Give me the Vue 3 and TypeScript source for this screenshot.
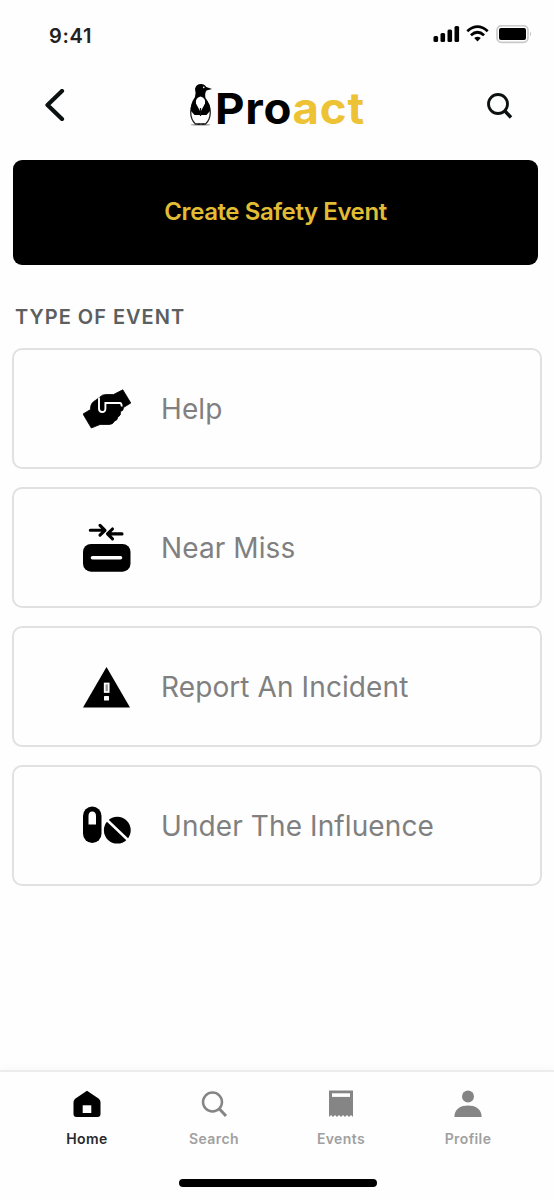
<script setup lang="ts">
interface EventType { id: string; label: string }
interface Tab { id: string; label: string; active?: boolean }

const eventTypes: EventType[] = [
  { id: 'help', label: 'Help' },
  { id: 'near', label: 'Near Miss' },
  { id: 'incident', label: 'Report An Incident' },
  { id: 'influence', label: 'Under The Influence' },
]
const tabs: Tab[] = [
  { id: 'home', label: 'Home', active: true },
  { id: 'search', label: 'Search' },
  { id: 'events', label: 'Events' },
  { id: 'profile', label: 'Profile' },
]
</script>

<template>
  <div class="screen">
    <div class="status">
      <span class="time">9:41</span>
      <svg class="status-icons" width="100" height="20" viewBox="0 0 100 20">
        <rect x="0.5" y="11" width="4.6" height="6" rx="1.5" />
        <rect x="7.5" y="8" width="4.6" height="9" rx="1.5" />
        <rect x="14.5" y="4.5" width="4.6" height="12.5" rx="1.5" />
        <rect x="21.5" y="1" width="4.6" height="16" rx="1.5" />
        <g fill="none" stroke="#000" stroke-width="2.7">
          <path d="M34.3 6.2Q44.5-3 54.7 6.2" />
          <path d="M37.9 10.2Q44.5 4.3 51.1 10.2" />
        </g>
        <path d="M41.2 12.9Q44.5 10.7 47.8 12.9L44.5 16.5Z" />
        <rect x="64" y="0.7" width="31" height="16.6" rx="4.5" fill="#fff" stroke="#c9c9c9" stroke-width="1.7" />
        <rect x="66" y="3" width="27" height="12" rx="2" />
        <path d="M97.2 6.5q1.8 2.5 0 5z" fill="#aaa" />
      </svg>
    </div>

    <header class="header">
      <svg class="back" width="20" height="32" viewBox="0 0 20 32"><path d="M17 2L2.5 16L17 30" fill="none" stroke="#0b1010" stroke-width="4.2" stroke-linecap="round" stroke-linejoin="round" /></svg>
      <div class="logo">
        <svg class="penguin" width="24" height="44" viewBox="0 0 24 44">
          <ellipse cx="10.5" cy="40.7" rx="10" ry="1" fill="#aaa" />
          <path d="M6.5 15C-1 22-1 34 5.5 40H15.5C22 34 22 22 14.5 15Z" fill="#fff" stroke="#222" stroke-width="1.3" />
          <path d="M5 5Q6 0 11 0Q14.5 0 16.3 3L22 5L16.5 6.5Q14.5 9 15.5 14Q21 21 20 27L16.5 31L10.5 31L4.5 31L1 27Q0 20 5 13Q6 8 5 5Z" fill="#000" />
          <path d="M10.5 12.5Q5 14 6 19.5L10.5 28L15 19.5Q16 14 10.5 12.5Z" fill="#fff" />
          <path d="M10.5 24V32" stroke="#111" stroke-width="1.3" />
          <path d="M7.5 40.3h2.5M11.5 40.3h3" stroke="#222" stroke-width="1.6" />
          <circle cx="13.8" cy="3.4" r=".8" fill="#fff" />
        </svg>
        <span class="wordmark">Pro<span class="gold">act</span></span>
      </div>
      <svg class="find" width="26" height="27" viewBox="0 0 26 27" fill="none" stroke="#0b1010" stroke-width="2.8"><circle cx="11" cy="11" r="9.5" /><path d="M17.5 17.5L24 24.5" stroke-width="3.4" /></svg>
    </header>

    <button class="create"><span>Create Safety Event</span></button>

    <h2 class="section">TYPE OF EVENT</h2>

    <div class="list">
      <div v-for="item in eventTypes" :key="item.id" class="card">
        <svg v-if="item.id === 'help'" class="icon" width="48" height="50" viewBox="0 -5 48 50">
          <path d="M0 25L7.5 20.5Q7 14 13 11L17 8Q19 5.5 23 5.5H30.5L39.8 .8L47.8 14L40.5 18.5Q40.5 22 37.5 22.5Q38 27 34.8 28Q34.5 31.5 31.5 32Q30 35.5 26 35.5H17L8.3 39Z" stroke="#000" stroke-width=".8" stroke-linejoin="round" />
          <path d="M16 8.5V19.5Q16 23 19.2 23T22.4 19.5V14H37Q38.5 14 38.8 17.5" fill="none" stroke="#fff" stroke-width="1.9" />
        </svg>
        <svg v-else-if="item.id === 'near'" class="icon" width="48" height="50" viewBox="0 0 48 50">
          <rect x="0" y="21" width="47.5" height="27.7" rx="8" />
          <path d="M9.5 34.8H37.5" stroke="#fff" stroke-width="3.6" stroke-linecap="round" />
          <path d="M7.3 7.3H21M17 2.4L22 7.3L17 12.2M39 10.9H25.5M29.5 6L24.5 10.9L29.5 15.8" fill="none" stroke="#000" stroke-width="3.1" stroke-linecap="round" stroke-linejoin="round" />
        </svg>
        <svg v-else-if="item.id === 'incident'" class="icon" width="48" height="50" viewBox="0 -5 48 50">
          <path d="M23.5 0L47 40.5H0Z" />
          <rect x="21.7" y="16.5" width="4" height="8.5" fill="#999" stroke="#fff" stroke-width="1.7" />
          <rect x="21" y="29" width="5" height="4.5" rx=".6" fill="#fff" />
        </svg>
        <svg v-else class="icon" width="48" height="50" viewBox="0 -5 48 50">
          <rect x="0" y="0.5" width="18.5" height="36.5" rx="9.25" />
          <path d="M5.5 18.5V10Q5.5 5.5 9.25 5.5T13 10V18.5Z" fill="#fff" />
          <circle cx="34.3" cy="24.2" r="13.4" />
          <path d="M23.5 13.5L46 35" stroke="#fff" stroke-width="2.5" />
        </svg>
        <span class="label">{{ item.label }}</span>
      </div>
    </div>

    <nav class="tabs">
      <div v-for="tab in tabs" :key="tab.id" :class="['tab', { active: tab.active }]">
        <svg v-if="tab.id === 'home'" width="28" height="28" viewBox="0 0 28 28"><path d="M14 .7L25.5 8.5Q27.5 10 27.5 12V24Q27.5 27 24.5 27H3.5Q.5 27 .5 24V12Q.5 10 2.5 8.5Z" /><rect x="9.7" y="15.3" width="8.6" height="7.7" fill="#fff" /></svg>
        <svg v-else-if="tab.id === 'search'" width="28" height="28" viewBox="0 0 28 28" fill="none" stroke="#858585" stroke-width="2.5"><circle cx="12.5" cy="12" r="9.5" /><path d="M19 18.5L26 26" stroke-width="3" /></svg>
        <svg v-else-if="tab.id === 'events'" width="28" height="28" viewBox="0 0 28 28" fill="#858585"><path d="M2 .5H26V27L24 25L22 27L20 25L18 27L16 25L14 27L12 25L10 27L8 25L6 27L4 25L2 27Z" /><rect x="5" y="3.3" width="18" height="3.6" fill="#fff" /></svg>
        <svg v-else width="28" height="28" viewBox="0 0 28 28" fill="#858585"><circle cx="14" cy="6.5" r="6" /><path d="M.5 27V25C1.5 18.5 7 15.5 14 15.5S26.5 18.5 27.5 25V27Z" /></svg>
        <span>{{ tab.label }}</span>
      </div>
    </nav>
    <div class="home-indicator"></div>
  </div>
</template>

<style>
body { background: #fefefe; }
</style>

<style scoped>
* { box-sizing: border-box; }
.screen { width: 554px; height: 1200px; display: flex; flex-direction: column; background: #fefefe; font-family: Inter, "Liberation Sans", sans-serif; overflow: hidden; }
.status { height: 70px; display: flex; justify-content: space-between; padding: 25px 21px 0 49px; }
.time { font-size: 20px; line-height: 22px; font-weight: 600; letter-spacing: .7px; color: #222; }
.header { height: 90px; display: flex; padding: 0 41px 0 45px; }
.back { flex: none; margin-top: 19px; }
.find { flex: none; margin: 23px 0 0 auto; }
.logo { display: flex; align-items: flex-start; gap: 1px; padding-top: 14px; margin-left: 125px; }
.penguin { flex: none; }
.wordmark { font-size: 43px; line-height: 49px; font-weight: 750; letter-spacing: .7px; transform: scaleX(1.06); transform-origin: left; }
.gold { color: #edc234; }
.create { flex: none; width: 525px; height: 105px; margin-left: 13px; border: 0; border-radius: 9px; background: #000; color: #e2bc35; font: 600 24px/30px Inter, sans-serif; letter-spacing: -.42px; padding: 0 0 2px; }
.section { margin: 40px 0 0 15px; height: 43px; font-size: 20px; line-height: 24px; font-weight: 600; letter-spacing: 1px; color: #5c5f5f; }
.list { display: flex; flex-direction: column; gap: 18px; padding: 0 12px; }
.card { height: 121px; border: 2px solid #e1e1e1; border-radius: 10px; display: flex; align-items: center; padding-left: 69px; }
.icon { flex: none; margin-right: 30px; }
.label { font-size: 28px; line-height: 34px; color: #808080; white-space: nowrap; letter-spacing: .1px; }
.tabs { margin-top: auto; height: 109px; border-top: 2px solid #ececec; box-shadow: 0 -3px 8px rgba(0,0,0,.025); display: flex; padding: 18px 22.5px 0 23.5px; }
.tab { width: 127px; display: flex; flex-direction: column; align-items: center; gap: 12px; color: #a0a0a0; font-size: 14px; line-height: 18px; font-weight: 600; letter-spacing: .4px; }
.active { color: #292929; }
.active svg { fill: #000; }
.home-indicator { flex: none; width: 198px; height: 8px; border-radius: 4px; background: #000; margin: 0 0 13px 179px; }
</style>
